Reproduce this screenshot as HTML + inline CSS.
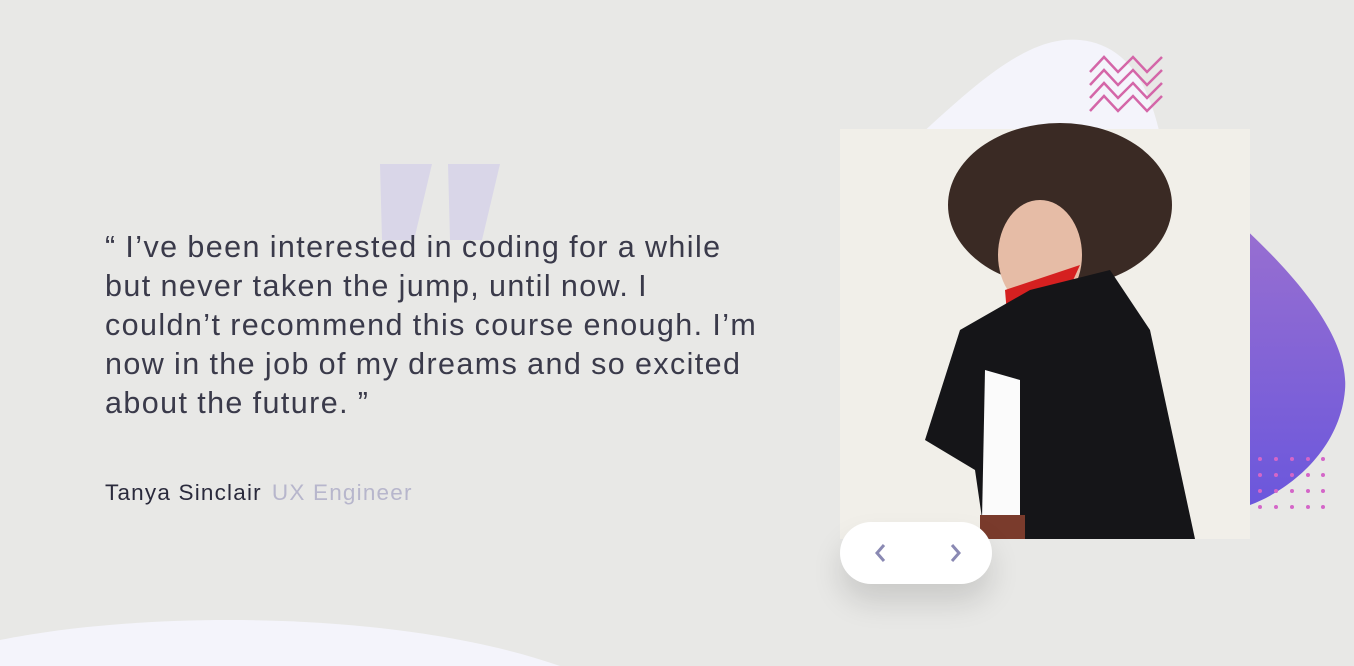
<!DOCTYPE html>
<html><head><meta charset="utf-8"><style>
html,body{margin:0;padding:0}
body{width:1354px;height:666px;background:#e8e8e6;position:relative;overflow:hidden;font-family:"Liberation Sans",sans-serif}
.q{position:absolute;left:105px;top:228px;white-space:nowrap;font-size:30.5px;line-height:39px;color:#3a3a4a;font-weight:300;letter-spacing:1.4px;word-spacing:-1px}
.n{position:absolute;left:105px;top:480px;font-size:22.5px;color:#2a2a3c;letter-spacing:1.2px}
.n span{color:#b7b6cc;margin-left:10px}
.nav{position:absolute;left:840px;top:522px;width:152px;height:62px;border-radius:31px;background:#fff;box-shadow:0 18px 30px rgba(0,0,0,.13)}
</style></head><body>
<svg width="1354" height="666" style="position:absolute;left:0;top:0">
<defs><linearGradient id="g" x1="0" y1="0" x2="0" y2="1"><stop offset="0" stop-color="#9a70d0"/><stop offset="1" stop-color="#6b57dc"/></linearGradient></defs>
<path d="M920 135 C980 80 1030 35 1080 40 C1130 45 1150 90 1160 135 Z" fill="#f4f4fb"/>
<path d="M1230 215 C1280 260 1350 330 1345 390 C1340 450 1290 490 1250 505 L1250 215 Z" fill="url(#g)"/>
<g fill="none" stroke="#d466a8" stroke-width="2.5">
<path d="M1090 72 l14-15 14 15 15-15 14 15 15-15"/>
<path d="M1090 85 l14-15 14 15 15-15 14 15 15-15"/>
<path d="M1090 98 l14-15 14 15 15-15 14 15 15-15"/>
<path d="M1090 111 l14-15 14 15 15-15 14 15 15-15"/>
</g>
<g fill="#d466c8">
<circle cx="1260" cy="459" r="2"/><circle cx="1276" cy="459" r="2"/><circle cx="1292" cy="459" r="2"/><circle cx="1308" cy="459" r="2"/><circle cx="1323" cy="459" r="2"/>
<circle cx="1260" cy="475" r="2"/><circle cx="1276" cy="475" r="2"/><circle cx="1292" cy="475" r="2"/><circle cx="1308" cy="475" r="2"/><circle cx="1323" cy="475" r="2"/>
<circle cx="1260" cy="491" r="2"/><circle cx="1276" cy="491" r="2"/><circle cx="1292" cy="491" r="2"/><circle cx="1308" cy="491" r="2"/><circle cx="1323" cy="491" r="2"/>
<circle cx="1260" cy="507" r="2"/><circle cx="1276" cy="507" r="2"/><circle cx="1292" cy="507" r="2"/><circle cx="1308" cy="507" r="2"/><circle cx="1323" cy="507" r="2"/>
</g>
<path d="M0 640 C150 610 400 610 560 666 L0 666 Z" fill="#f4f4fb"/>
<path d="M380 164 L432 164 L414 240 L382 240 Z M448 164 L500 164 L482 240 L450 240 Z" fill="#d9d6e8"/>
<rect x="840" y="129" width="410" height="410" fill="#f1efe9"/>
<ellipse cx="1060" cy="205" rx="112" ry="82" fill="#3a2a24"/>
<ellipse cx="1040" cy="255" rx="42" ry="55" fill="#e6bca6"/>
<path d="M1005 290 L1080 265 L1030 375 L1010 350 Z" fill="#d52020"/>
<path d="M960 330 L1030 290 L1110 270 L1150 330 L1195 539 L985 539 L975 470 L925 440 Z" fill="#151518"/>
<path d="M985 370 L1020 380 L1020 520 L982 520 Z" fill="#fbfbfb"/>
<path d="M980 515 L1025 515 L1025 539 L980 539 Z" fill="#7a3b2c"/>
</svg>
<div class="q">“ I’ve been interested in coding for a while<br>but never taken the jump, until now. I<br>couldn’t recommend this course enough. I’m<br>now in the job of my dreams and so excited<br>about the future. ”</div>
<div class="n">Tanya Sinclair<span>UX Engineer</span></div>
<div class="nav"><svg width="152" height="62"><path d="M884 545 l-7 8 7 8" transform="translate(-840,-522)" fill="none" stroke="#8a89b3" stroke-width="3"/><path d="M952 545 l7 8 -7 8" transform="translate(-840,-522)" fill="none" stroke="#8a89b3" stroke-width="3"/></svg></div>
</body></html>
